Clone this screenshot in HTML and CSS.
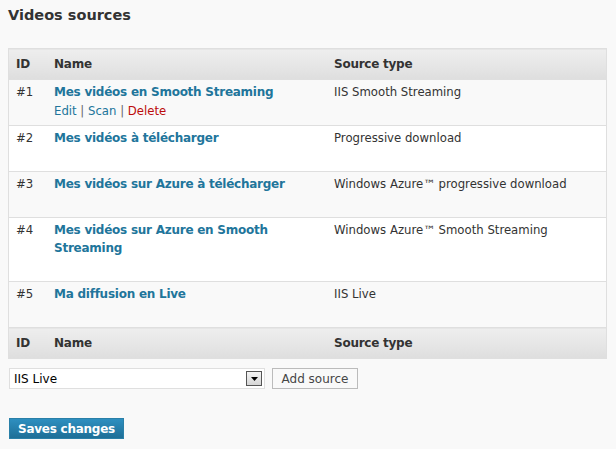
FILE: index.html
```html
<!DOCTYPE html>
<html>
<head>
<meta charset="utf-8">
<link rel="stylesheet" href="styles.css">
</head>
<body>
<div class="wrap">
  <h2 class="title">Videos sources</h2>
  <table class="widefat">
    <thead>
      <tr><th class="col-id">ID</th><th class="col-name">Name</th><th class="col-type">Source type</th></tr>
    </thead>
    <tbody>
      <tr class="alt">
        <td class="col-id">#1</td>
        <td class="col-name"><a class="row-title" href="#">Mes vidéos en Smooth Streaming</a>
          <div class="row-actions"><a href="#">Edit</a> | <a href="#">Scan</a> | <a class="del" href="#">Delete</a></div></td>
        <td class="col-type">IIS Smooth Streaming</td>
      </tr>
      <tr>
        <td class="col-id">#2</td>
        <td class="col-name"><a class="row-title" href="#">Mes vidéos à télécharger</a>
          <div class="row-actions hidden"><a href="#">Edit</a> | <a href="#">Scan</a> | <a class="del" href="#">Delete</a></div></td>
        <td class="col-type">Progressive download</td>
      </tr>
      <tr class="alt">
        <td class="col-id">#3</td>
        <td class="col-name"><a class="row-title" href="#">Mes vidéos sur Azure à télécharger</a>
          <div class="row-actions hidden"><a href="#">Edit</a> | <a href="#">Scan</a> | <a class="del" href="#">Delete</a></div></td>
        <td class="col-type">Windows Azure™ progressive download</td>
      </tr>
      <tr>
        <td class="col-id">#4</td>
        <td class="col-name"><a class="row-title" href="#">Mes vidéos sur Azure en Smooth Streaming</a>
          <div class="row-actions hidden"><a href="#">Edit</a> | <a href="#">Scan</a> | <a class="del" href="#">Delete</a></div></td>
        <td class="col-type">Windows Azure™ Smooth Streaming</td>
      </tr>
      <tr class="alt">
        <td class="col-id">#5</td>
        <td class="col-name"><a class="row-title" href="#">Ma diffusion en Live</a>
          <div class="row-actions hidden"><a href="#">Edit</a> | <a href="#">Scan</a> | <a class="del" href="#">Delete</a></div></td>
        <td class="col-type">IIS Live</td>
      </tr>
    </tbody>
    <tfoot>
      <tr><th class="col-id">ID</th><th class="col-name">Name</th><th class="col-type">Source type</th></tr>
    </tfoot>
  </table>
  <div class="add-row">
    <div class="select-wrap">
      <select class="select">
        <option>IIS Live</option>
      </select>
      <span class="select-arrow"><svg width="7" height="4" viewBox="0 0 7 4"><path d="M0 0h7L3.5 4z" fill="#000"/></svg></span>
    </div>
    <button class="button">Add source</button>
  </div>
  <button class="button-primary">Saves changes</button>
</div>
</body>
</html>
```

FILE: styles.css
```css
html, body {
  margin: 0;
  padding: 0;
  background: #f9f9f9;
}
body {
  font-family: "DejaVu Sans", Verdana, sans-serif;
  font-size: 11px;
  color: #333;
}
.wrap {
  padding: 0 8px;
}
.title {
  margin: 0;
  padding: 6px 0 0;
  height: 48px;
  box-sizing: border-box;
  font-size: 14.5px;
  font-weight: bold;
  color: #333;
  line-height: 18px;
}
.widefat {
  width: 599px;
  border-collapse: collapse;
  border: 1px solid #dfdfdf;
  background: #f9f9f9;
}
.widefat th {
  text-align: left;
  font-weight: bold;
  font-size: 12px;
  letter-spacing: -0.25px;
  color: #333;
  height: 31px;
  padding: 0 9px 0 7px;
  box-sizing: border-box;
  background: linear-gradient(#eeeeee, #dedede);
  vertical-align: middle;
  line-height: 14px;
}
.widefat thead th {
  border-bottom: 1px solid #dfdfdf;
}
.widefat tfoot th {
  border-top: 1px solid #dfdfdf;
  height: 31px;
}
.widefat td {
  padding: 3px 9px 6px 7px;
  vertical-align: top;
  font-size: 11.7px;
  line-height: 18px;
  border-top: 1px solid #dfdfdf;
  background: #fff;
}
.widefat tr.alt td {
  background: #f9f9f9;
}
.widefat tbody tr:first-child td {
  border-top: none;
}
.col-id { width: 22px; }
.col-name { width: 264px; }
.row-title {
  font-size: 12px;
  font-weight: bold;
  letter-spacing: -0.25px;
  color: #21759b;
  text-decoration: none;
}
.row-actions {
  padding-top: 2px;
  font-size: 11.7px;
  line-height: 16px;
  color: #666;
}
.row-actions.hidden {
  visibility: hidden;
}
.row-actions a {
  color: #21759b;
  text-decoration: none;
}
.row-actions a.del {
  color: #bc0b0b;
}
.add-row {
  display: flex;
  gap: 7px;
  align-items: center;
  margin-top: 9px;
  margin-left: 1px;
}
.select-wrap {
  position: relative;
  width: 256px;
  height: 21px;
}
.select {
  appearance: none;
  -webkit-appearance: none;
  width: 100%;
  height: 21px;
  box-sizing: border-box;
  border: 1px solid #dfdfdf;
  background: #fff;
  font-family: "DejaVu Sans", Verdana, sans-serif;
  font-size: 12px;
  color: #000;
  padding: 0 4px;
  margin: 0;
  border-radius: 0;
}
.select-arrow {
  position: absolute;
  right: 3px;
  top: 3px;
  width: 16px;
  height: 15px;
  box-sizing: border-box;
  border: 1px solid #555;
  background: linear-gradient(#f4f4f4, #d6d6d6);
  display: flex;
  align-items: center;
  justify-content: center;
  pointer-events: none;
}
.button {
  height: 21px;
  width: 86px;
  box-sizing: border-box;
  padding: 0;
  font-family: "DejaVu Sans", Verdana, sans-serif;
  font-size: 12px;
  color: #464646;
  background: #f9f9f9;
  border: 1px solid #bbb;
  border-radius: 0;
  margin: 0;
}
.button-primary {
  display: block;
  margin: 29px 0 0 1px;
  height: 21px;
  width: 115px;
  box-sizing: border-box;
  padding: 0;
  font-family: "DejaVu Sans", Verdana, sans-serif;
  font-size: 12px;
  letter-spacing: -0.25px;
  font-weight: bold;
  color: #fff;
  background: linear-gradient(#2e8fc0, #1e6f97);
  border: 1px solid #2a80a8;
  border-radius: 0;
}
```
